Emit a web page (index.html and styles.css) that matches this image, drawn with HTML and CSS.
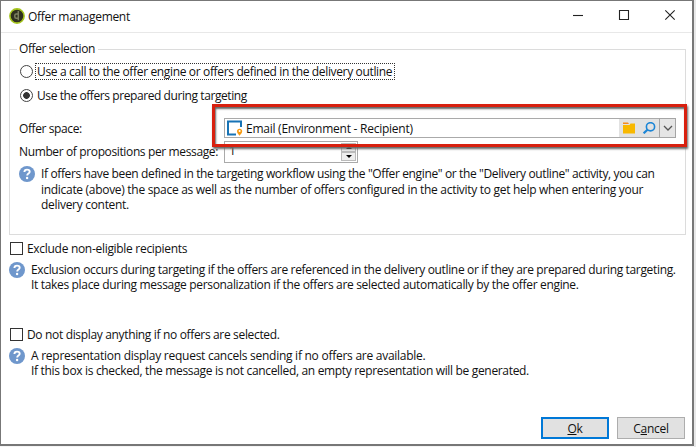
FILE: index.html
```html
<!DOCTYPE html>
<html lang="en">
<head>
<meta charset="utf-8">
<title>Offer management</title>
<link rel="stylesheet" href="styles.css">
</head>
<body>
<svg width="0" height="0" class="defs"><defs>
<symbol id="help" viewBox="0 0 16 16"><circle cx="8" cy="8" r="8" fill="#6f97cc"/><path d="M5.4 6.1C5.4 4.4 6.5 3.6 8 3.6s2.7.8 2.7 2.1c0 1.8-2.5 1.8-2.5 3.7" fill="none" stroke="#fff" stroke-width="1.9"/><circle cx="8.1" cy="12" r="1.2" fill="#fff"/></symbol>
</defs></svg>
<div class="window">
  <header class="titlebar">
    <svg class="logo" viewBox="0 0 16 16"><circle cx="8" cy="8" r="7.1" fill="#30301f" stroke="#a4c41c" stroke-width="1.6"/><path d="M9.3 3v9.3M9.3 6.1H7.2Q5.8 6.1 5.8 7.5v1.3q0 1.5 1.4 1.5h2.1" fill="none" stroke="#7c8060" stroke-width="1.5"/></svg>
    <h1 class="t-title">Offer management</h1>
    <div class="controls">
      <svg viewBox="0 0 12 12"><path d="M1 6.5h10"/></svg>
      <svg viewBox="0 0 12 12"><path d="M1.5 1.5h9v9h-9z"/></svg>
      <svg viewBox="0 0 12 12"><path d="M1.3 1.3l9.4 9.4M10.7 1.3l-9.4 9.4"/></svg>
    </div>
  </header>
  <main>
    <fieldset>
      <legend><span class="t-legend">Offer selection</span></legend>
      <label class="radio"><i class="dot"></i><span class="focus"><span class="t-call">Use a call to the offer engine or offers defined in the delivery outline</span></span></label>
      <label class="radio second"><i class="dot on"></i><span class="t-prep">Use the offers prepared during targeting</span></label>
      <div class="row space"><span class="label t-space">Offer space:</span>
        <div class="combo">
          <svg class="env" viewBox="0 0 17 16"><path d="M15 7V1.5H2v13h8" fill="none" stroke="#1773b5" stroke-width="2"/><path d="M13.5 15.8c-1.3-2-2.5-2.8-2.5-4.5a2.6 2.6 0 0 1 5.2 0c0 1.7-1.3 2.5-2.7 4.5z" fill="#f79a10"/><circle cx="13.6" cy="11.1" r="1" fill="#fff"/></svg>
          <span class="t-email">Email (Environment - Recipient)</span>
          <div class="tools">
            <svg viewBox="0 0 14 12"><path d="M1 .5h5l1 1.5H1z" fill="#f58b1f"/><path d="M1 3h6.5l1-1.5H13v10H1z" fill="#f8b800"/></svg>
            <svg class="lens" viewBox="0 0 14 12"><circle cx="8.5" cy="4.8" r="4.1" fill="none" stroke="#1d86d6" stroke-width="1.6"/><path d="M5.5 7.8L1.6 11.3" stroke="#1d86d6" stroke-width="2.2"/></svg>
          </div>
          <div class="drop"><svg viewBox="0 0 10 6"><path d="M1 1l4 4 4-4" fill="none" stroke="#555" stroke-width="1.3"/></svg></div>
          <div class="highlight"></div>
        </div>
      </div>
      <div class="row count"><span class="label t-num">Number of propositions per message:</span>
        <div class="spin"><span>1</span><div class="arrows"><i class="up"></i><i class="down"></i></div></div>
      </div>
      <div class="note offers"><svg><use href="#help"/></svg><p><span class="t-n1">If offers have been defined in the targeting workflow using the "Offer engine" or the "Delivery outline" activity, you can</span><span class="t-n2">indicate (above) the space as well as the number of offers configured in the activity to get help when entering your</span><span class="t-n3">delivery content.</span></p></div>
    </fieldset>
    <label class="check"><i></i><span class="t-excl">Exclude non-eligible recipients</span></label>
    <div class="note outer"><svg><use href="#help"/></svg><p><span class="t-e1">Exclusion occurs during targeting if the offers are referenced in the delivery outline or if they are prepared during targeting.</span><span class="t-e2">It takes place during message personalization if the offers are selected automatically by the offer engine.</span></p></div>
    <label class="check later"><i></i><span class="t-none">Do not display anything if no offers are selected.</span></label>
    <div class="note outer"><svg><use href="#help"/></svg><p><span class="t-r1">A representation display request cancels sending if no offers are available.</span><span class="t-r2">If this box is checked, the message is not cancelled, an empty representation will be generated.</span></p></div>
  </main>
  <footer><button class="primary"><u>O</u>k</button><button>C<u>a</u>ncel</button></footer>
</div>
<div class="backdrop"></div>
</body>
</html>
```
FILE: styles.css
```css
* { box-sizing: border-box; }
body { margin: 0; width: 696px; height: 447px; overflow: hidden; display: flex; background: #f5f5f5; font: 12px/15px "Open Sans", "Noto Sans", sans-serif; letter-spacing: -0.3px; color: #111; }
.defs { position: absolute; }
.window { width: 694px; height: 446px; background: #fff; border: solid #777; border-width: 1px 2px 2px 1px; display: flex; flex-direction: column; white-space: nowrap; }
.titlebar { height: 32px; border-bottom: 1px solid #e8e8e8; display: flex; align-items: center; padding: 0 0 0 8px; flex: none; }
.logo { width: 16px; height: 16px; margin-right: 3px; margin-top: -1px; }
h1 { font-size: 12px; font-weight: 400; margin: 0; }
.controls { margin-left: auto; display: flex; gap: 34px; padding-right: 16px; margin-top: -3px; }
.controls svg { width: 12px; height: 12px; fill: none; stroke: #222; stroke-width: 1.1; }
main { padding: 8px 6px 0 8px; flex: 1; }
fieldset { margin: 0; padding: 0 0 0 9px; border: 1px solid #dcdcdc; height: 194px; min-width: 0; }
legend { margin-left: -2px; padding: 0 3px 0 2px; height: 16px; }
.radio { display: flex; align-items: center; height: 17px; margin-top: 6px; padding-left: 1px; }
.radio.second { margin-top: 7px; }
.dot { width: 13px; height: 13px; border: 1px solid #444; border-radius: 50%; margin-right: 4px; }
.dot.on { background: radial-gradient(circle, #333 3px, #fff 3.7px); }
.focus { height: 17px; width: 360px; border: 1px dotted #333; margin-left: -2px; padding: 0 1px; line-height: 15px; }
.row { display: flex; align-items: center; }
.label { width: 205px; flex: none; }
.space { height: 20px; margin-top: 14px; }
.combo { position: relative; display: flex; width: 452px; height: 20px; border: 1px solid #aaa; align-items: center; }
.env { width: 17px; height: 16px; margin: 0 3px 0 1px; }
.tools { margin-left: auto; width: 40px; height: 18px; background: #e2e2e2; display: flex; align-items: center; gap: 6px; padding-left: 3px; }
.tools svg { width: 14px; height: 12px; }
.drop { width: 17px; height: 20px; margin-right: -1px; border: 1px solid #a5a5a5; background: #e5e5e5; display: grid; place-items: center; }
.drop svg { width: 10px; height: 6px; }
.highlight { position: absolute; left: -13px; top: -15px; width: 475px; height: 43px; border: 3px solid #d8200f; box-shadow: 1px 2px 2px #666, inset 1px 2px 2px #666; z-index: 2; }
.count { height: 22px; margin-top: 3px; }
.count .label { margin-top: -2px; }
.spin { display: flex; justify-content: space-between; width: 134px; height: 22px; border: 1px solid #aaa; padding: 1px 1px 1px 4px; }
.spin span { margin-top: 0; }
.arrows { display: grid; grid-template-rows: 9px 9px; width: 15px; }
.arrows i { border: 1px solid #bbb; background: #eee; display: grid; place-items: center; }
.arrows i::after { content: ""; border: 3px solid transparent; border-bottom-color: #000; border-top: 0; }
.arrows .down::after { border-top: 3px solid #000; border-bottom: 0; }
.note { display: flex; gap: 6px; margin-top: 3px; }
.note svg { width: 16px; height: 16px; flex: none; }
.note p { margin: 0; line-height: 15px; }
.offers p { line-height: 15.5px; }
.note p span { display: block; }
.check { display: flex; align-items: center; height: 16px; margin-top: 5px; }
.check i { width: 13px; height: 13px; border: 1px solid #333; margin: 0 4px 0 1px; }
.outer { margin-top: 6px; }
.check.later { margin-top: 34px; }
footer { display: flex; justify-content: flex-end; gap: 8px; padding-right: 7px; height: 27px; flex: none; }
button { width: 68px; height: 22px; padding: 0; border: 1px solid #adadad; background: #e1e1e1; font: inherit; letter-spacing: inherit; color: inherit; }
button.primary { border: 2px solid #0078d7; }
.backdrop { width: 2px; background: #e8e8e8; }
.t-legend, .t-space { letter-spacing: -0.4px; }
.t-call { letter-spacing: -0.35px; }
.t-e2, .t-r2 { letter-spacing: -0.33px; }
.t-prep { letter-spacing: -0.42px; }
.t-num { letter-spacing: -0.37px; }
.t-n1 { letter-spacing: -0.37px; }
.t-e1, .t-none { letter-spacing: -0.34px; }
.t-r1 { letter-spacing: -0.26px; }
.t-email { letter-spacing: -0.25px; }
```
